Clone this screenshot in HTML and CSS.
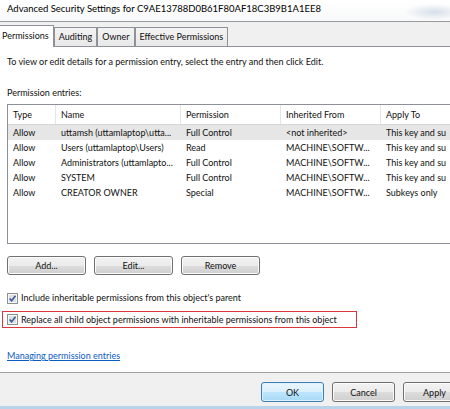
FILE: index.html
```html
<!DOCTYPE html>
<html>
<head>
<meta charset="utf-8">
<title>Advanced Security Settings</title>
<link rel="stylesheet" href="styles.css">
</head>
<body>
<div class="window">
  <div class="titlebar"><span class="title">Advanced Security Settings for C9AE13788D0B61F80AF18C3B9B1A1EE8</span></div>
  <div class="tabstrip">
    <div class="tab active">Permissions</div>
    <div class="tab">Auditing</div>
    <div class="tab">Owner</div>
    <div class="tab">Effective Permissions</div>
  </div>
  <div class="panel">
    <p class="intro">To view or edit details for a permission entry, select the entry and then click Edit.</p>
    <p class="caption">Permission entries:</p>
    <div class="listbox">
      <div class="lrow head"><span>Type</span><span>Name</span><span>Permission</span><span>Inherited From</span><span>Apply To</span></div>
      <div class="lrow sel"><span>Allow</span><span>uttamsh (uttamlaptop\utta...</span><span>Full Control</span><span>&lt;not inherited&gt;</span><span>This key and su</span></div>
      <div class="lrow"><span>Allow</span><span>Users (uttamlaptop\Users)</span><span>Read</span><span>MACHINE\SOFTW...</span><span>This key and su</span></div>
      <div class="lrow"><span>Allow</span><span>Administrators (uttamlapto...</span><span>Full Control</span><span>MACHINE\SOFTW...</span><span>This key and su</span></div>
      <div class="lrow"><span>Allow</span><span>SYSTEM</span><span>Full Control</span><span>MACHINE\SOFTW...</span><span>This key and su</span></div>
      <div class="lrow"><span>Allow</span><span>CREATOR OWNER</span><span>Special</span><span>MACHINE\SOFTW...</span><span>Subkeys only</span></div>
    </div>
    <div class="actions">
      <button class="btn wide">Add...</button>
      <button class="btn wide">Edit...</button>
      <button class="btn wide">Remove</button>
    </div>
    <label class="check">
      <svg class="box" width="11" height="11" viewBox="0 0 11 11"><rect x="0.5" y="0.5" width="10" height="10" fill="#f6f6f6" stroke="#8e8f8f"/><rect x="2" y="2" width="7" height="7" fill="#dde1e6"/><path d="M2.6 5.4 L4.6 7.7 L8.5 2.7" fill="none" stroke="#3a5590" stroke-width="1.5"/></svg>
      <span>Include inheritable permissions from this object's parent</span>
    </label>
    <div class="outline">
      <label class="check">
        <svg class="box" width="11" height="11" viewBox="0 0 11 11"><rect x="0.5" y="0.5" width="10" height="10" fill="#f6f6f6" stroke="#8e8f8f"/><rect x="2" y="2" width="7" height="7" fill="#dde1e6"/><path d="M2.6 5.4 L4.6 7.7 L8.5 2.7" fill="none" stroke="#3a5590" stroke-width="1.5"/></svg>
        <span>Replace all child object permissions with inheritable permissions from this object</span>
      </label>
    </div>
    <a class="link" href="#">Managing permission entries</a>
  </div>
  <div class="footer">
    <button class="btn default">OK</button>
    <button class="btn">Cancel</button>
    <button class="btn">Apply</button>
  </div>
</div>
</body>
</html>
```

FILE: styles.css
```css
html, body {
  margin: 0;
  padding: 0;
}
body {
  width: 450px;
  height: 409px;
  overflow: hidden;
  background: #ffffff;
  font-family: Lato, "Liberation Sans", Arial, sans-serif;
  font-size: 9px;
  color: #111;
}
.window {
  width: 480px;
  margin-left: -6px;
}
.titlebar {
  height: 18px;
  padding: 3px 0 0 13px;
  border-bottom: 1px solid #9a9a9a;
  background:
    radial-gradient(ellipse 30px 8px at 440px 12px, rgba(150,170,200,0.35), rgba(255,255,255,0) 100%),
    linear-gradient(#ffffff, #f8f9fa);
}
.title {
  display: block;
  line-height: 12px;
  font-size: 9.5px;
  color: #000;
}
.tabstrip {
  height: 24px;
  display: flex;
  align-items: flex-end;
  background: #f0f0f0;
  border-bottom: 1px solid #8e9198;
}
.tab {
  height: 18px;
  line-height: 18px;
  padding: 0 4px;
  border: 1px solid #8e9198;
  border-bottom: none;
  background: linear-gradient(#f3f3f3, #e8e8e8);
  color: #111;
  white-space: nowrap;
}
.tab.active {
  height: 21px;
  line-height: 20px;
  padding: 0 4px 0 7px;
  margin-bottom: -1px;
  background: #ffffff;
}
.panel {
  background: #ffffff;
  padding: 9px 0 10px 13px;
  border-bottom: 1px solid #a0a0a0;
}
.intro, .caption {
  margin: 0;
  line-height: 12px;
}
.caption {
  margin-top: 19px;
}
.listbox {
  margin-top: 5px;
  height: 138px;
  border: 1px solid #8d9096;
  border-right: none;
  background: #fff;
}
.lrow {
  display: grid;
  grid-template-columns: 48px 125px 100px 100px 1fr;
  height: 15px;
  line-height: 15px;
  white-space: nowrap;
}
.lrow span {
  padding-left: 5px;
  overflow: hidden;
}
.lrow.head {
  height: 19px;
  line-height: 19px;
  border-bottom: 1px solid #d5d5d5;
}
.lrow.head span {
  border-right: 1px solid #e5e5e5;
}
.lrow.head span:last-child {
  border-right: none;
}
.lrow.sel {
  background: #e6e6e6;
}
.actions {
  display: flex;
  gap: 8px;
  margin-top: 12px;
}
.btn {
  font-family: inherit;
  font-size: 9px;
  color: #111;
  height: 19px;
  width: 63px;
  padding: 0;
  border: 1px solid #707070;
  border-radius: 3px;
  background: linear-gradient(#f2f2f2 0%, #ebebeb 50%, #dddddd 50%, #cfcfcf 100%);
  box-shadow: inset 0 0 0 1px #fbfbfb;
}
.btn.wide {
  width: 79px;
}
.btn.default {
  border-color: #3c7fb1;
  background: linear-gradient(#eaf6fd 0%, #d9f0fc 50%, #bee6fd 50%, #a7d9f5 100%);
  box-shadow: inset 0 0 0 1px #dff2fc;
}
.check {
  display: flex;
  align-items: center;
  gap: 3px;
  height: 12px;
  line-height: 12px;
  margin-top: 17px;
  white-space: nowrap;
}
.box {
  flex: none;
  display: block;
}
.outline {
  width: 349px;
  height: 15px;
  margin: 7px 0 0 -5px;
  padding-left: 4px;
  border: 1px solid #d9363e;
  display: flex;
  align-items: center;
}
.outline .check {
  margin-top: 0;
}
.link {
  display: block;
  width: max-content;
  margin-top: 22px;
  line-height: 12px;
  color: #0a5bc4;
  text-decoration: underline;
}
.footer {
  display: flex;
  justify-content: flex-end;
  gap: 8px;
  padding: 9px 8px 4px;
  background: #f0f0f0;
  border-bottom: 3px solid #b9d3ea;
}
.footer .btn {
  height: 20px;
}
```
